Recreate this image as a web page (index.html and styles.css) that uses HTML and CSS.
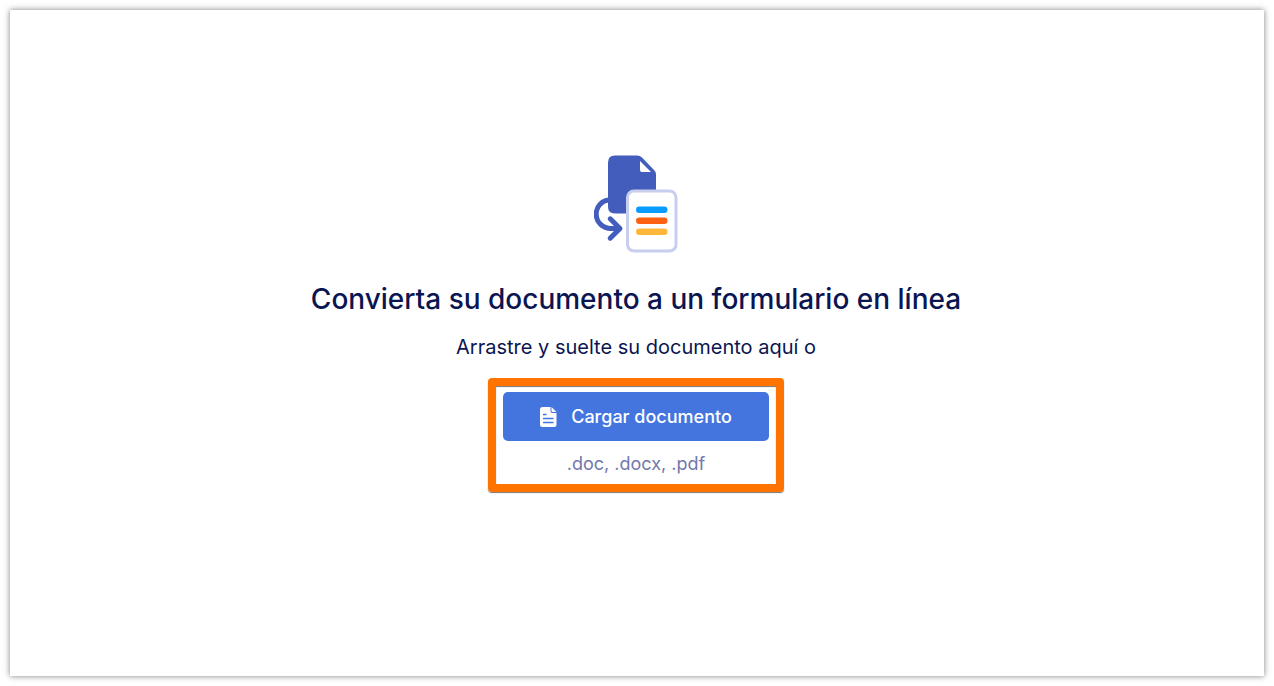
FILE: index.html
```html
<!DOCTYPE html>
<html lang="es">
<head>
    <meta charset="UTF-8">
    <meta name="viewport" content="width=device-width, initial-scale=1.0">
    <title>Convierta su documento</title>
    <link rel="stylesheet" href="styles.css">
</head>
<body>
    <main class="panel">
        <svg class="convert-icon" width="84" height="98" viewBox="0 0 84 98" fill="none" aria-hidden="true">
            <path d="M21 0.5H43Q46 0.5 48 2.5L60 15Q62 17 62 19V58.5H21Q14 58.5 14 51.5V7.5Q14 0.5 21 0.5Z" fill="#425dbb"/>
            <path d="M46 6L57 17H48Q46 17 46 15Z" fill="#fff"/>
            <path d="M16 45C8 45 2.2 51.5 2.2 59C2.2 67.5 9 73.5 17 73.5H25" stroke="#425dbb" stroke-width="5"/>
            <path d="M16.200 63.800L26 73.500L16.200 83.200" stroke="#425dbb" stroke-width="5" stroke-linecap="round" stroke-linejoin="round"/>
            <rect x="33.500" y="36" width="48.500" height="60" rx="6.500" fill="#fff" stroke="#c8ceed" stroke-width="3"/>
            <rect x="42" y="51.500" width="31.500" height="6.500" rx="3.250" fill="#0a9bff"/>
            <rect x="42" y="62.500" width="31.500" height="6.500" rx="3.250" fill="#ff6112"/>
            <rect x="42" y="73.500" width="31.500" height="6.500" rx="3.250" fill="#ffb63a"/>
        </svg>

        <h1>Convierta su documento a un formulario en línea</h1>
        <p class="hint">Arrastre y suelte su documento aquí o</p>

        <div class="upload-box">
            <button type="button" class="upload-btn">
                <svg width="17" height="20" viewBox="0 0 17 20" aria-hidden="true">
                    <path d="M2.500 0H10.500V4Q10.500 6 12.500 6H16.500V17.500Q16.500 20 14 20H2.500Q0 20 0 17.500V2.500Q0 0 2.500 0Z" fill="#fff"/>
                    <path d="M11.500 0L16.500 5H13Q11.500 5 11.500 3.500Z" fill="#fff"/>
                    <path d="M3 7.500H6.500M3 11.500H13.500M3 15.500H13.500" stroke="#4475df" stroke-width="1.500"/>
                </svg>
                Cargar documento
            </button>
            <p class="formats">.doc, .docx, .pdf</p>
        </div>
    </main>
</body>
</html>
```
FILE: styles.css
```css
* {
    box-sizing: border-box;
}

body {
    font-family: Inter, "Liberation Sans", sans-serif;
    margin: 0;
    padding: 10px;
    min-height: 100vh;
    display: flex;
    background-color: #fff;
    color: #0a1551;
}

.panel {
    flex: 1;
    display: flex;
    flex-direction: column;
    align-items: center;
    padding: 145px 22px 20px 20px;
    background-color: #fff;
    box-shadow: 0 0 6px rgba(0, 0, 0, 0.5);
    text-align: center;
}

.convert-icon {
    flex-shrink: 0;
}

h1 {
    font-size: 28px;
    font-weight: 500;
    line-height: 36px;
    margin: 28px 0 16px;
}

.hint {
    font-size: 20px;
    line-height: 28px;
    margin: 0 0 17px;
}

.upload-box {
    width: 296px;
    padding: 6px 7px 8px;
    border: 8px solid #ff7300;
    border-radius: 4px;
    box-shadow: 0 1px 1px #777, inset 0 1px 1px #777;
}

.upload-btn {
    display: flex;
    align-items: center;
    justify-content: center;
    gap: 14px;
    width: 100%;
    height: 49px;
    border: none;
    border-radius: 5px;
    background-color: #4475df;
    color: #fff;
    font-family: inherit;
    font-size: 18px;
    font-weight: 500;
    cursor: pointer;
}

.upload-btn:hover {
    background-color: #3564cb;
}

.formats {
    font-size: 18px;
    line-height: 24px;
    margin: 11px 0 0;
    color: #7278ad;
}
```
